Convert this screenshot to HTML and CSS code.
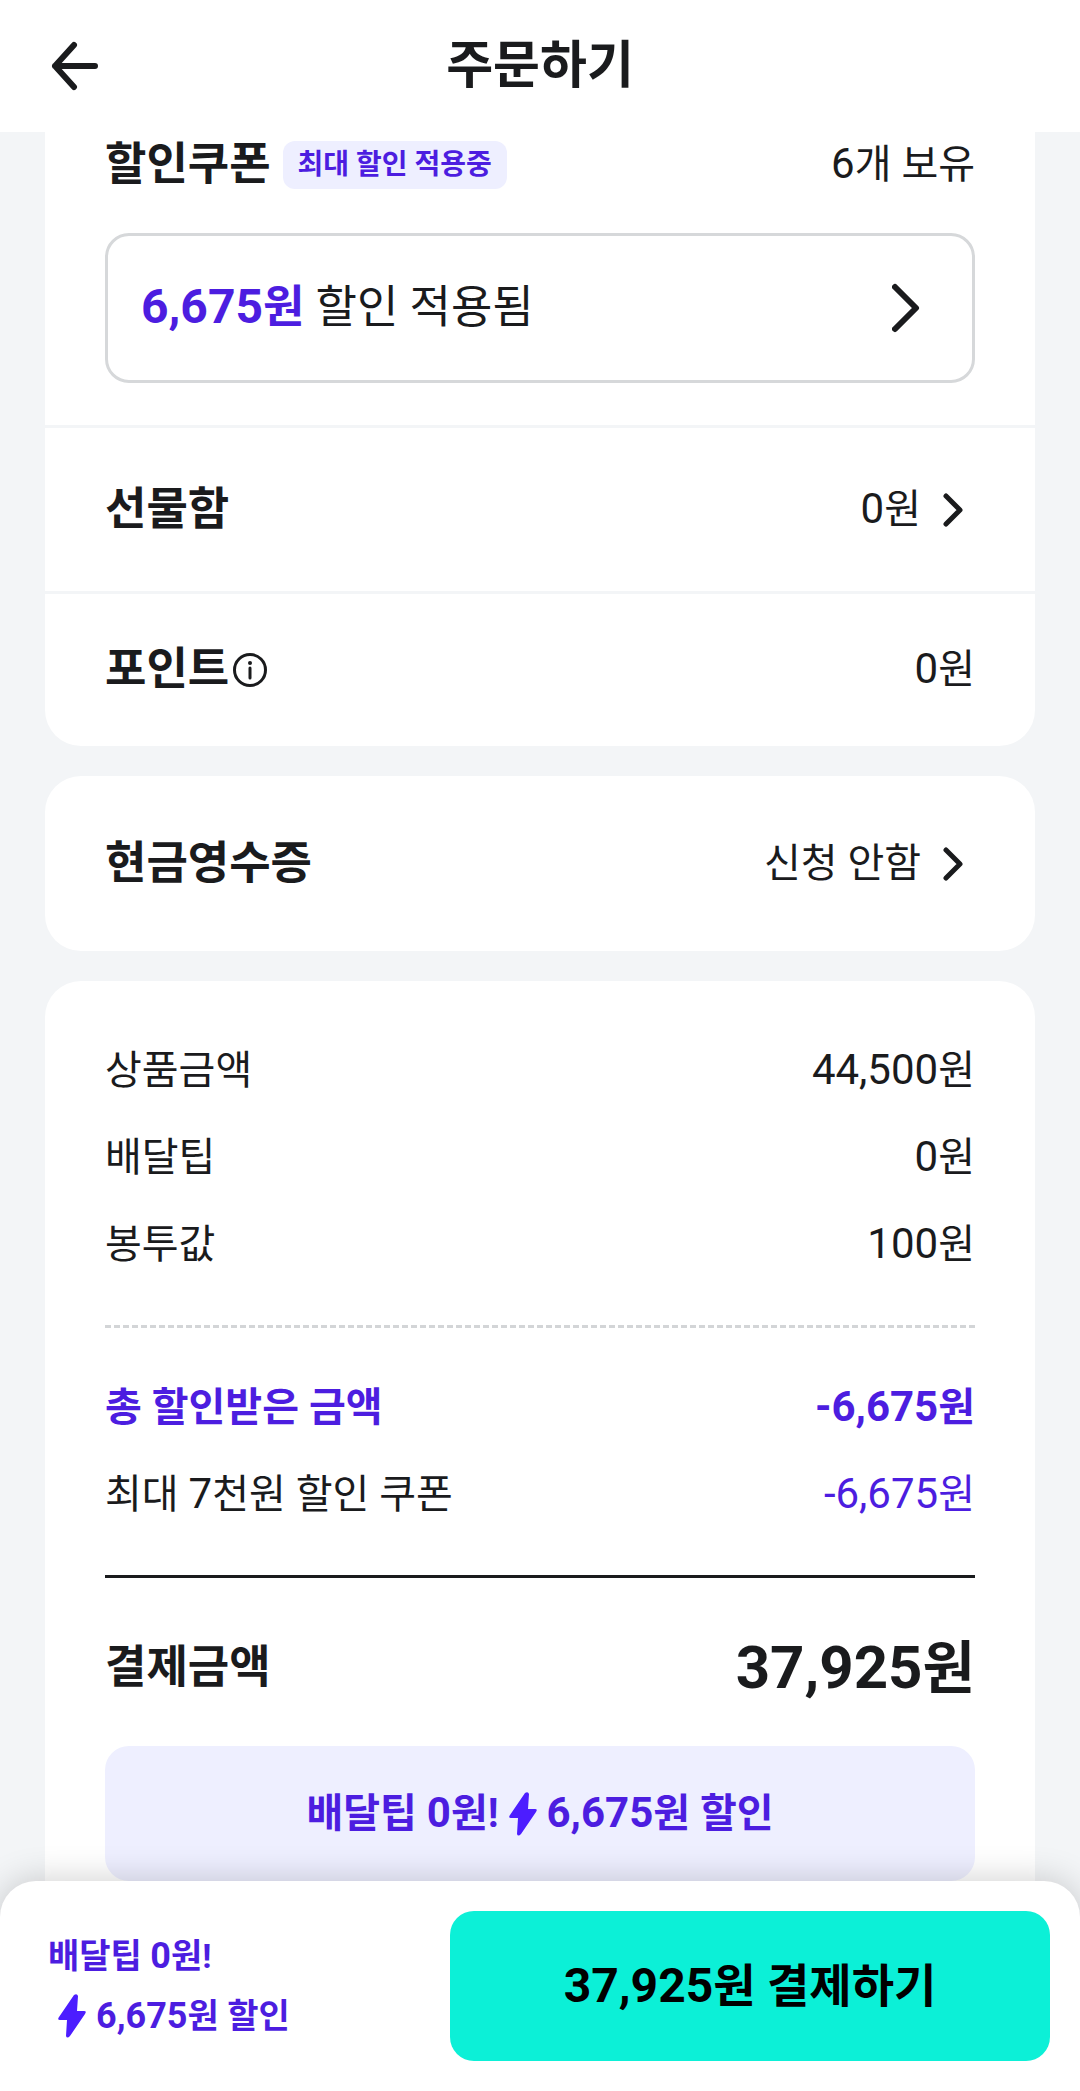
FILE: index.html
```html
<!DOCTYPE html>
<html lang="ko">

<head>
    <meta charset="UTF-8">
    <meta name="viewport" content="width=device-width, initial-scale=1.0">
    <title>주문하기</title>
    <link rel="stylesheet" href="styles.css">
</head>

<body>
    <header class="top">
        <button type="button" class="back" aria-label="뒤로">
            <svg width="48" height="50" viewBox="0 0 48 50">
                <path d="M44 25H4M23 4L4 25l19 21" />
            </svg>
        </button>
        <h1>주문하기</h1>
    </header>

    <main>
        <!-- 할인쿠폰, 선물함, 포인트 -->
        <section class="card first">
            <div class="coupon">
                <div class="line">
                    <h2>할인쿠폰</h2>
                    <span class="badge">최대 할인 적용중</span>
                    <span class="value"><span class="num">6</span>개 보유</span>
                </div>
                <button type="button" class="coupon-box">
                    <span><b><span class="num">6,675</span>원</b> 할인 적용됨</span>
                    <svg class="arrow" width="28" height="50" viewBox="0 0 28 50">
                        <path d="M3 4l21 21L3 46" />
                    </svg>
                </button>
            </div>
            <button type="button" class="line gift">
                <span class="name">선물함</span>
                <span class="value"><span class="num">0</span>원</span>
                <svg class="arrow small" width="20" height="34" viewBox="0 0 20 34">
                    <path d="M3 3l14 14L3 31" />
                </svg>
            </button>
            <div class="line point">
                <h2>포인트</h2>
                <button type="button" class="info" aria-label="포인트 안내">
                    <svg width="34" height="34" viewBox="0 0 34 34">
                        <circle cx="17" cy="17" r="15.5" />
                        <path d="M17 15v10" />
                        <path class="dot" d="M17 10v0" />
                    </svg>
                </button>
                <span class="value"><span class="num">0</span>원</span>
            </div>
        </section>

        <section class="card">
            <button type="button" class="line receipt">
                <span class="name">현금영수증</span>
                <span class="value">신청 안함</span>
                <svg class="arrow small" width="20" height="34" viewBox="0 0 20 34">
                    <path d="M3 3l14 14L3 31" />
                </svg>
            </button>
        </section>

        <!-- 결제금액 -->
        <section class="card price">
            <dl>
                <div><dt>상품금액</dt><dd><span class="num">44,500</span>원</dd></div>
                <div><dt>배달팁</dt><dd><span class="num">0</span>원</dd></div>
                <div><dt>봉투값</dt><dd><span class="num">100</span>원</dd></div>
            </dl>
            <div class="dashed"></div>
            <dl>
                <div class="sale"><dt>총 할인받은 금액</dt><dd><span class="num">-6,675</span>원</dd></div>
                <div><dt>최대 <span class="num">7</span>천원 할인 쿠폰</dt><dd class="purple"><span class="num">-6,675</span>원</dd></div>
            </dl>
            <div class="total">
                <h2>결제금액</h2>
                <strong><span class="num">37,925</span>원</strong>
            </div>
            <p class="banner">
                <span>배달팁 <span class="num">0</span>원!</span>
                <svg class="bolt" width="28" height="44" viewBox="0 0 28 44">
                    <path d="M16 1L1 23q-2 3 1 3h7l-1 16q1 3 4 0L27 20q2-3-1-3h-7l1-15q-1-3-4-1z" />
                </svg>
                <span><span class="num">6,675</span>원 할인</span>
            </p>
        </section>
    </main>

    <footer class="bottom">
        <div class="benefit">
            <p>배달팁 <span class="num">0</span>원!</p>
            <p class="with-bolt">
                <svg class="bolt" width="28" height="44" viewBox="0 0 28 44">
                    <path d="M16 1L1 23q-2 3 1 3h7l-1 16q1 3 4 0L27 20q2-3-1-3h-7l1-15q-1-3-4-1z" />
                </svg>
                <span><span class="num">6,675</span>원 할인</span>
            </p>
        </div>
        <button type="button" class="pay"><span class="num">37,925</span>원 결제하기</button>
    </footer>
</body>

</html>
```
FILE: styles.css
```css
* {
    box-sizing: border-box;
}

body {
    margin: 0;
    background-color: #f3f5f7;
    color: #1a1b1d;
    font-family: Roboto, "Noto Sans CJK KR", sans-serif;
    font-size: 40px;
    line-height: 60px;
    white-space: nowrap;
}

h1,
h2,
p,
dl,
dd {
    margin: 0;
}

button {
    padding: 0;
    border: 0;
    background: none;
    color: inherit;
    font: inherit;
    cursor: pointer;
}

svg {
    display: block;
    flex: none;
    fill: none;
    stroke: #1a1b1d;
    stroke-width: 6px;
    stroke-linecap: round;
    stroke-linejoin: round;
}

h2,
.name {
    font-size: 45px;
    font-weight: bold;
}

.num {
    font-size: 42px;
    line-height: 1;
}

/* header */
.top {
    position: sticky;
    top: 0;
    z-index: 1;
    display: grid;
    grid-template-columns: 48px 1fr 48px;
    align-items: center;
    height: 132px;
    padding: 0 51px;
    background-color: #fff;
}

h1 {
    font-size: 51px;
    text-align: center;
}

.back svg {
    stroke-width: 6px;
}

/* cards */
main {
    padding: 0 45px;
}

.card {
    margin-bottom: 30px;
    border-radius: 36px;
    background-color: #fff;
}

.card.first {
    border-radius: 0 0 36px 36px;
}

.line {
    display: flex;
    align-items: center;
    width: 100%;
}

.value {
    margin-left: auto;
}

.coupon {
    padding: 3px 60px 42px;
}

.badge {
    margin-left: 12px;
    padding: 0 15px;
    border-radius: 12px;
    background-color: #eeefff;
    color: #4c1de0;
    font-size: 28px;
    font-weight: bold;
    line-height: 48px;
}

.coupon-box {
    display: flex;
    align-items: center;
    justify-content: space-between;
    width: 100%;
    height: 150px;
    margin-top: 38px;
    padding: 0 52px 0 33px;
    border: 3px solid #d6d8da;
    border-radius: 24px;
    font-size: 45px;
}

.coupon-box b {
    color: #4c1de0;
}

.coupon-box .num {
    font-size: 48px;
}

.gift,
.point {
    border-top: 3px solid #f3f5f7;
    padding: 0 60px;
}

.gift {
    height: 166px;
}

.point {
    height: 155px;
}

.receipt {
    height: 175px;
    padding: 0 60px;
}

.arrow.small {
    margin: 0 12px 0 22px;
    stroke-width: 5px;
}

.info {
    margin-left: 4px;
}

.info svg {
    stroke-width: 3px;
}

.info .dot {
    stroke-width: 4px;
}

/* price */
.price {
    margin: 0;
    padding: 60px 60px 0;
    border-radius: 36px 36px 0 0;
}

dl div {
    display: flex;
    justify-content: space-between;
    margin-bottom: 27px;
}

.dashed {
    height: 3px;
    margin: 50px 0;
    background: repeating-linear-gradient(to right, #d3d5d7 0 6px, #fff 6px 9px);
}

.sale {
    color: #4c1de0;
    font-weight: bold;
}

.purple {
    color: #4c1de0;
}

.total {
    display: flex;
    align-items: center;
    justify-content: space-between;
    height: 171px;
    margin-top: 50px;
    border-top: 3px solid #1a1b1d;
    padding-top: 12px;
}

.total strong {
    font-size: 57px;
}

.total .num {
    font-size: 60px;
}

.bolt {
    stroke: none;
    fill: #4c1dff;
}

.banner {
    display: flex;
    align-items: center;
    justify-content: center;
    gap: 10px;
    height: 135px;
    border-radius: 24px;
    background-color: #eeefff;
    color: #4c1de0;
    font-weight: bold;
}

/* bottom bar */
.bottom {
    position: sticky;
    bottom: 0;
    display: grid;
    grid-template-columns: 2fr 3fr;
    gap: 20px;
    align-items: center;
    padding: 30px;
    border-radius: 36px 36px 0 0;
    background-color: #fff;
    box-shadow: 0 0 36px rgba(0, 0, 0, 0.2);
}

.benefit {
    padding-left: 18px;
    color: #4c1de0;
    font-size: 34px;
    font-weight: bold;
}

.benefit .num {
    font-size: 36px;
}

.with-bolt {
    display: flex;
    align-items: center;
    gap: 10px;
    padding-left: 10px;
}

.pay {
    height: 150px;
    border-radius: 24px;
    background-color: #0cf0d7;
    color: #000;
    font-size: 46px;
    font-weight: bold;
}

.pay .num {
    font-size: 48px;
}
```
